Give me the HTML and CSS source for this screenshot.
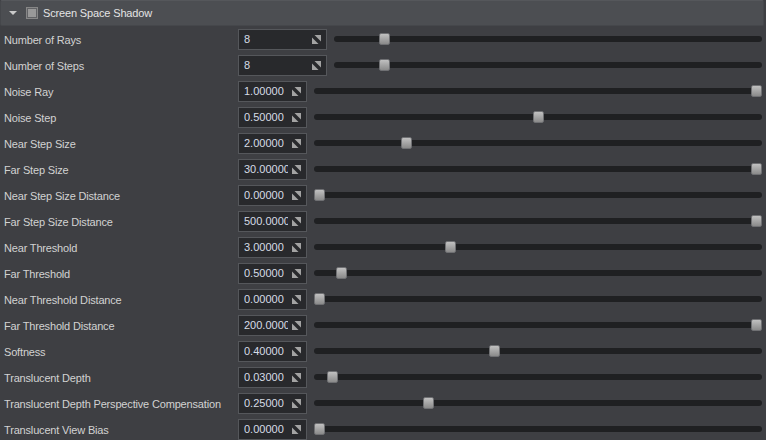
FILE: index.html
```html
<html>
    <head>
        <meta charset="UTF-8">
        <title>Screen Space Shadow</title>
        <link rel="stylesheet" href="styles.css">
    </head>
    <body>
        <div class="panel">
            <div class="header">
                <span class="arrow"></span>
                <span class="check"></span>
                <span class="title">Screen Space Shadow</span>
            </div>
            <div id="rows"></div>
        </div>

        <script>
            const params = [
                ['Number of Rays', '8', 0.108, true],
                ['Number of Steps', '8', 0.108, true],
                ['Noise Ray', '1.00000', 1],
                ['Noise Step', '0.50000', 0.5],
                ['Near Step Size', '2.00000', 0.2],
                ['Far Step Size', '30.00000', 1],
                ['Near Step Size Distance', '0.00000', 0],
                ['Far Step Size Distance', '500.0000', 1],
                ['Near Threshold', '3.00000', 0.3],
                ['Far Threshold', '0.50000', 0.05],
                ['Near Threshold Distance', '0.00000', 0],
                ['Far Threshold Distance', '200.0000', 1],
                ['Softness', '0.40000', 0.4],
                ['Translucent Depth', '0.03000', 0.03],
                ['Translucent Depth Perspective Compensation', '0.25000', 0.25],
                ['Translucent View Bias', '0.00000', 0]
            ];
            const icon = `<svg class="spin" width="9" height="9" viewBox="0 0 9 9"><polygon points="2.5,0 9,0 9,6.5" fill="#a3a3a3"/><polygon points="0,2.5 0,9 6.5,9" fill="#a3a3a3"/></svg>`;
            document.getElementById('rows').innerHTML = params.map(([name, val, t, wide]) => `
                <div class="row">
                    <div class="label">${name}</div>
                    <div class="field${wide ? ' wide' : ''}"><span class="value">${val}</span>${icon}</div>
                    <div class="slider"><div class="track"></div><div class="knob-area"><div class="knob" style="left:${(t * 100).toFixed(1)}%"></div></div></div>
                </div>`).join('');
        </script>
    </body>
</html>
```

FILE: styles.css
```css
* {
    box-sizing: border-box;
}
body {
    margin: 0;
    background: #3e3f43;
    font-family: "Liberation Sans", Arial, sans-serif;
    font-size: 11px;
    color: #d2d2d2;
    overflow: hidden;
}
.panel {
    width: 766px;
}
.header {
    height: 26px;
    margin-right: 2px;
    background: #4c4e52;
    border: 1px solid #45474b;
    border-top-color: #55575b;
    border-radius: 2px;
    display: flex;
    align-items: center;
}
.arrow {
    width: 0;
    height: 0;
    margin-left: 8px;
    border-left: 4px solid transparent;
    border-right: 4px solid transparent;
    border-top: 4px solid #cacaca;
}
.check {
    width: 12px;
    height: 12px;
    margin-left: 9px;
    border: 1px solid #878787;
    background: #999999;
    box-shadow: inset 0 0 0 1px #626366;
}
.title {
    margin-left: 5px;
    color: #e4e4e4;
    letter-spacing: -0.15px;
}
.row {
    height: 26px;
    display: flex;
    align-items: center;
}
.label {
    width: 238px;
    padding-left: 4px;
    white-space: nowrap;
    padding-top: 1px;
    letter-spacing: -0.17px;
}
.field {
    width: 69px;
    height: 21px;
    background: #28292c;
    border: 1px solid #55575b;
    display: flex;
    align-items: center;
    padding-left: 5px;
    color: #d6dce6;
}
.field.wide {
    width: 89px;
}
.value {
    width: 44px;
    overflow: hidden;
    white-space: nowrap;
}
.field.wide .value {
    width: 64px;
}
.spin {
    flex: none;
    margin-left: 4px;
}
.slider {
    flex: 1;
    margin-left: 7px;
    margin-right: 4px;
    height: 12px;
    position: relative;
}
.track {
    position: absolute;
    left: 0;
    right: 0;
    top: 3px;
    height: 6px;
    border-radius: 3px;
    background: #1f2022;
}
.knob-area {
    position: absolute;
    left: 0;
    right: 11px;
    top: 0;
    bottom: 0;
}
.knob {
    position: absolute;
    top: 0;
    width: 11px;
    height: 12px;
    border-radius: 2px;
    background: linear-gradient(#c0c0c0, #8a8a8a);
    border: 1px solid #6f7073;
}
```
